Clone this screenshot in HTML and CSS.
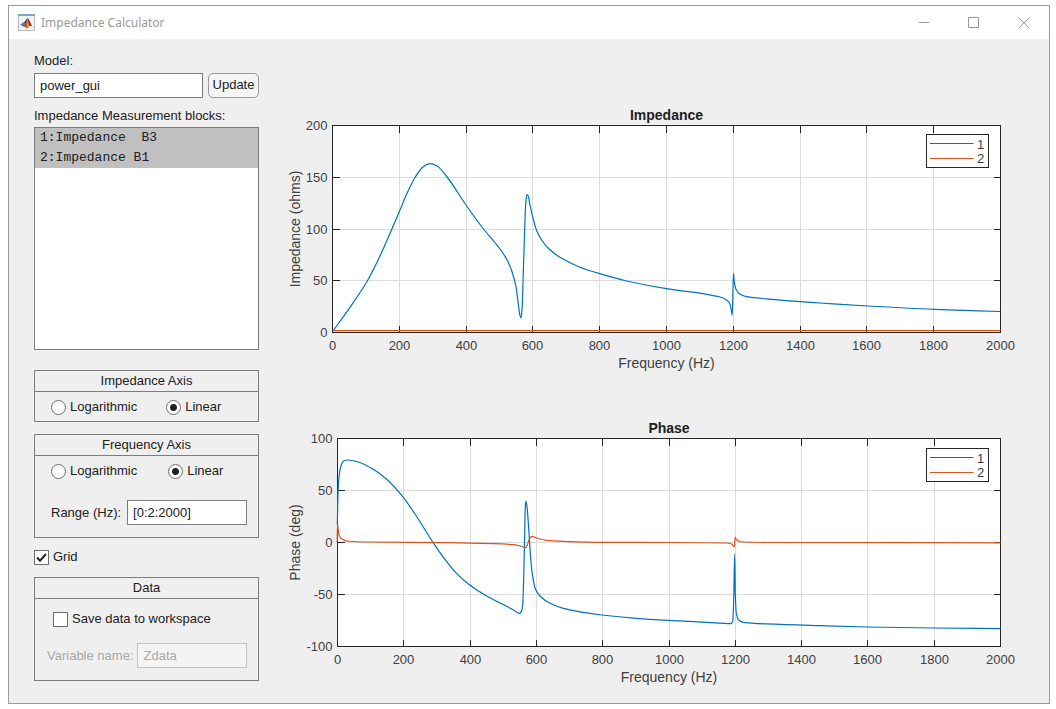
FILE: index.html
```html
<!DOCTYPE html>
<html lang="en">
<head>
<meta charset="utf-8">
<title>Impedance Calculator</title>
<link rel="stylesheet" href="styles.css">
</head>
<body>
<div class="window">
  <header class="titlebar">
    <svg class="logo" viewBox="0 0 17 17" aria-hidden="true">
      <rect x="0.5" y="0.5" width="16" height="16" fill="#f4f4f4" stroke="#b4b9be"/>
      <rect x="0" y="0" width="17" height="2" fill="#7aa5cc"/>
      <path d="M2 10.4L5.8 8.2L8 10.4L5.2 12.6Z" fill="#3f7fb5"/>
      <path d="M5.8 8.2C7.4 7.8 8 5.4 9.4 4L8.8 10L8 10.4Z" fill="#27466e"/>
      <path d="M9.4 4C8.6 7 7.6 9.6 5.2 12.6C7 12 7.8 13.8 8.6 14.4C10 13.8 10.6 12 12.2 11.8L10.6 6Z" fill="#c8401c"/>
      <path d="M9.4 4C9.2 8 8.6 11 8.6 14.4C10 13.6 10.4 12 11.4 11.8Z" fill="#f08c2a"/>
      <path d="M9.4 4C11.2 5 12.8 10.4 15 13C13.2 11.6 12.6 11.6 11.6 12Z" fill="#8c2414"/>
    </svg>
    <h1 class="title">Impedance Calculator</h1>
    <div class="controls">
      <button class="control" aria-label="Minimize"><svg viewBox="0 0 12 12"><path d="M0.5 5.5H11.5"/></svg></button>
      <button class="control" aria-label="Maximize"><svg viewBox="0 0 12 12"><path d="M0.5 0.5H10.5V10.5H0.5Z"/></svg></button>
      <button class="control" aria-label="Close"><svg viewBox="0 0 12 12"><path d="M0.5 0.5L11.5 11.5M11.5 0.5L0.5 11.5"/></svg></button>
    </div>
  </header>
  <main class="content">
    <form class="sidebar">
      <label class="label" for="model">Model:</label>
      <div class="model-row">
        <input class="field" id="model" type="text" value="power_gui">
        <button class="update" type="button">Update</button>
      </div>
      <label class="label" for="blocks">Impedance Measurement blocks:</label>
      <select class="list" id="blocks" multiple>
        <option selected>1:Impedance&nbsp; B3</option>
        <option selected>2:Impedance B1</option>
      </select>

      <section class="panel">
        <h2 class="panel-title">Impedance Axis</h2>
        <div class="radios">
          <label class="choice"><input class="radio" type="radio" name="zaxis">Logarithmic</label>
          <label class="choice"><input class="radio" type="radio" name="zaxis" checked>Linear</label>
        </div>
      </section>

      <section class="panel panel-frequency">
        <h2 class="panel-title">Frequency Axis</h2>
        <div class="radios">
          <label class="choice"><input class="radio" type="radio" name="faxis">Logarithmic</label>
          <label class="choice"><input class="radio" type="radio" name="faxis" checked>Linear</label>
        </div>
        <div class="entry entry-range">
          <label for="range">Range (Hz):</label>
          <input class="field" id="range" type="text" value="[0:2:2000]">
        </div>
      </section>

      <label class="choice grid-toggle"><input class="check" type="checkbox" checked>Grid</label>

      <section class="panel">
        <h2 class="panel-title">Data</h2>
        <label class="choice save"><input class="check" type="checkbox">Save data to workspace</label>
        <div class="entry entry-variable">
          <label for="variable">Variable name:</label>
          <input class="field" id="variable" type="text" value="Zdata" disabled>
        </div>
      </section>
    </form>

    <div class="charts">
      <svg class="chart" id="impedance" viewBox="280 100 760 280" role="img" aria-label="Impedance"></svg>
      <svg class="chart" id="phase" viewBox="280 413 760 280" role="img" aria-label="Phase"></svg>
    </div>
  </main>
</div>
<script src="charts.js"></script>
</body>
</html>
```
FILE: styles.css
```css
* { box-sizing: border-box; }

body {
  margin: 0;
  padding: 5px 6px 5px 8px;
  min-height: 100vh;
  display: flex;
  background: #fff;
  color: #212121;
  font: 13px/16px "Liberation Sans", Arial, sans-serif;
}

input, button, select { font: inherit; color: inherit; margin: 0; }

.window {
  flex: 1;
  display: flex;
  flex-direction: column;
  border: 1px solid #9b9b9b;
  background: #efefef;
}

.titlebar {
  display: flex;
  align-items: center;
  height: 33px;
  padding-left: 9px;
  background: #fff;
}
.logo { width: 17px; height: 17px; }
.title {
  flex: 1;
  margin: 0 0 0 6px;
  font: 12px/16px "Noto Sans", sans-serif;
  color: #999;
}
.controls { display: flex; }
.control {
  width: 50px;
  height: 32px;
  padding: 0;
  border: 0;
  background: none;
}
.control svg {
  display: block;
  width: 12px;
  height: 12px;
  margin: auto;
  fill: none;
  stroke: #999;
}

.content {
  flex: 1;
  display: flex;
  gap: 21px;
  padding: 13px 9px 10px 25px;
}

.sidebar {
  flex: 0 0 225px;
  min-width: 0;
  display: flex;
  flex-direction: column;
}
.label { line-height: 17px; }
.model-row { display: flex; gap: 5px; margin: 4px 0 9px; }
.field {
  flex: 1;
  min-width: 0;
  width: 0;
  height: 25px;
  padding: 0 5px;
  border: 1px solid #7d7d7d;
  border-radius: 0;
  background: #fff;
}
.update {
  width: 51px;
  height: 25px;
  padding: 0 0 2px;
  border: 1px solid #9a9a9a;
  border-radius: 5px;
  background: #f5f5f5;
}
.list {
  height: 223px;
  margin: 3px 0 20px;
  padding: 0;
  border: 1px solid #7d7d7d;
  border-radius: 0;
  background: #fff;
  font-family: "Liberation Mono", monospace;
  overflow: hidden;
}
.list option { padding: 2px 5px; line-height: 16px; min-height: 20px; color: #212121; }
.list option:checked { background: #c0c0c0 linear-gradient(#c0c0c0, #c0c0c0); color: #212121; }

.panel { border: 1px solid #7d7d7d; }
.panel-title {
  margin: 0;
  padding: 2px 0;
  border-bottom: 1px solid #7d7d7d;
  font: inherit;
  text-align: center;
}
.radios {
  display: flex;
  gap: 29px;
  padding: 7px 0 6px 16px;
}
.choice { display: flex; align-items: center; gap: 4px; }
.radio, .check {
  appearance: none;
  flex: none;
  width: 15px;
  height: 15px;
  border: 1px solid #6e6e6e;
  background: #fff;
}
.radio { border-radius: 50%; }
.radio:checked { background: radial-gradient(circle, #212121 3px, #fff 4px); }
.check:checked {
  background: #fff url("data:image/svg+xml,%3Csvg xmlns='http://www.w3.org/2000/svg' viewBox='0 0 13 13'%3E%3Cpath d='M2 6.5L5 9.7L11 3' fill='none' stroke='%23212121' stroke-width='2'/%3E%3C/svg%3E");
}

.panel-frequency { margin-top: 12px; }
.panel-frequency .radios { gap: 31px; }
.entry { display: flex; align-items: center; padding-right: 11px; gap: 6px; }
.entry-range { padding: 15px 11px 12px 16px; }
.grid-toggle { margin: 11px 0 12px; align-self: flex-start; }
.save { padding: 12px 0 12px 18px; }
.entry-variable { padding: 4px 11px 12px 12px; gap: 4px; color: #a8a8a8; }
.field:disabled { border-color: #c4c4c4; background: #f4f4f4; color: #a8a8a8; }

.charts {
  flex: 1;
  min-width: 0;
  display: flex;
  flex-direction: column;
  gap: 33px;
  padding-top: 48px;
}
.chart { display: block; width: 100%; }

.plot { fill: #fff; }
.grid { stroke: #dcdcdc; fill: none; shape-rendering: crispEdges; }
.axes { stroke: #262626; fill: none; shape-rendering: crispEdges; }
.legend { fill: #fff; stroke: #262626; shape-rendering: crispEdges; }
.curve { fill: none; stroke-width: 1.2; stroke-linejoin: round; }
.blue { stroke: #0072bd; }
.orange { stroke: #d95319; }
.tick { font-size: 13px; fill: #404040; }
.axis-name { font-size: 14px; fill: #404040; }
.chart-title { font-size: 14px; font-weight: bold; fill: #212121; }
.middle { text-anchor: middle; }
.end { text-anchor: end; }
```
FILE: charts.js
```js
// Smooth path through the points without overshoot between them.
function curve(points) {
  const n = points.length;
  const slope = [];
  for (let i = 0; i < n - 1; i++) {
    slope.push((points[i + 1][1] - points[i][1]) / (points[i + 1][0] - points[i][0]));
  }
  const m = [slope[0]];
  for (let i = 1; i < n - 1; i++) {
    const a = slope[i - 1], b = slope[i];
    m.push(a * b <= 0 ? 0 : 2 * a * b / (a + b));
  }
  m.push(slope[n - 2]);
  let d = `M${points[0]}`;
  for (let i = 0; i < n - 1; i++) {
    const [x0, y0] = points[i], [x1, y1] = points[i + 1];
    const h = (x1 - x0) / 3;
    d += `C${x0 + h},${y0 + m[i] * h} ${x1 - h},${y1 - m[i + 1] * h} ${x1},${y1}`;
  }
  return d;
}

function draw(id, c) {
  const right = 1000.5;
  const { left, top, bottom } = c;
  const mid = (left + right) / 2;
  const step = (right - left) / 10;
  let grid = "", ticks = "", labels = "";
  for (let i = 0; i <= 10; i++) {
    const x = Math.floor(left + i * step) + 0.5;
    if (i > 0 && i < 10) {
      grid += `M${x} ${top}V${bottom}`;
      ticks += `M${x} ${top}v7M${x} ${bottom}v-7`;
    }
    labels += `<text class="tick middle" x="${x}" y="${bottom + 17}">${i * 200}</text>`;
  }
  c.values.forEach((v, i) => {
    const y = Math.floor(bottom - i * (bottom - top) / 4) + 0.5;
    if (i > 0 && i < 4) {
      grid += `M${left} ${y}H${right}`;
      ticks += `M${left} ${y}h7M${right} ${y}h-7`;
    }
    labels += `<text class="tick end" x="${left - 5}" y="${y + 4}">${v}</text>`;
  });
  const ly = c.legend;
  const nameY = (top + bottom) / 2;
  document.getElementById(id).innerHTML = `
    <rect class="plot" x="${left}" y="${top}" width="${right - left}" height="${bottom - top}"/>
    <path class="grid" d="${grid}"/>
    <path class="axes" d="${ticks}M${left} ${top}H${right}V${bottom}H${left}Z"/>
    <path class="curve blue" d="${curve(c.blue)}"/>
    <path class="curve orange" d="${curve(c.orange)}"/>
    ${labels}
    <text class="chart-title middle" x="${mid}" y="${top - 6}">${c.title}</text>
    <text class="axis-name middle" x="${mid}" y="${bottom + 35}">Frequency (Hz)</text>
    <text class="axis-name middle" transform="translate(300 ${nameY}) rotate(-90)">${c.yName}</text>
    <rect class="legend" x="926.5" y="${ly}" width="62" height="33"/>
    <path class="curve blue" d="M930 ${ly + 9}H973.5"/>
    <path class="curve orange" d="M930 ${ly + 24}H973.5"/>
    <text class="tick" x="977" y="${ly + 14}">1</text>
    <text class="tick" x="977" y="${ly + 28}">2</text>`;
}

draw("impedance", {
  title: "Impedance", yName: "Impedance (ohms)",
  left: 332.5, top: 125.5, bottom: 332.5, legend: 134.5,
  values: ["0", "50", "100", "150", "200"],
  blue: [[333, 331], [349.3, 308.3], [366.7, 282], [380, 256], [399.3, 211.7], [406.7, 194], [415, 177.5],
    [423.3, 166.7], [430, 163.7], [436.7, 165.7], [446.7, 176.5], [466, 205], [482.7, 228], [500, 249],
    [506.7, 259.3], [511.7, 270.7], [516, 286.7], [518, 301.7], [520, 315.7], [521, 318], [522, 310],
    [523, 283], [524.3, 240], [525.3, 211.7], [526, 200], [527, 194.7], [528.3, 196], [530, 205],
    [533.3, 219.3], [536.7, 230.7], [541.7, 240], [548.3, 248.3], [560, 257.3], [580, 267.2],
    [599.7, 273.7], [626.7, 281], [666.3, 288.7], [706.7, 294.3], [720, 297], [726.7, 300], [730, 304.3],
    [731.3, 310], [732.2, 315.3], [733.5, 273.3], [734.3, 281.7], [736, 289.3], [740, 294.3],
    [746.7, 296.7], [766.7, 298.9], [800, 301.7], [820, 303], [867.7, 306], [934, 309.3], [1000.5, 311.5]],
  orange: [[333, 330.7], [1000.5, 330.7]]
});

draw("phase", {
  title: "Phase", yName: "Phase (deg)",
  left: 337.5, top: 438.5, bottom: 646.5, legend: 448.5,
  values: ["-100", "-50", "0", "50", "100"],
  blue: [[337.3, 525], [338, 493.3], [339, 476.7], [340.7, 466.7], [343.3, 461.3], [348, 460],
    [358.3, 462], [373.3, 469.3], [386.7, 479.3], [402.7, 496.7], [415, 514], [433.3, 542.8],
    [446.7, 561.7], [456.7, 573.7], [469.3, 584.7], [486.7, 596], [506.7, 606.3], [515, 611],
    [519.3, 613.3], [521.3, 611.7], [522.7, 605], [523.7, 576.7], [524.7, 533], [525.3, 506.7],
    [526, 501], [527, 506.7], [529, 533], [530.3, 553.3], [532, 571.7], [535.3, 588.7], [540, 596],
    [550, 603.3], [563.3, 608.3], [580, 611.8], [601.7, 615], [636.7, 618.3], [668.3, 620.3],
    [706.7, 622.3], [730.7, 623.7], [732.7, 621.7], [733.7, 600], [734.7, 554.3], [735.3, 593.3],
    [736.3, 613.3], [738.7, 620], [743.3, 622.3], [766.7, 623.9], [820, 625.7], [867.7, 627],
    [934, 628], [1000.5, 628.7]],
  orange: [[337.2, 541.7], [337.5, 524.3], [339, 535], [341.7, 539], [346.7, 541], [366.7, 542],
    [446.7, 542.7], [493.3, 543.7], [513.3, 544.7], [520, 546], [525.7, 547.7], [527.3, 545],
    [529.3, 539], [531.7, 536.3], [536.7, 538], [546.7, 540.3], [563.3, 541.3], [601.7, 542.3],
    [668.3, 542.5], [726.7, 543], [731.7, 544], [734.3, 547], [735.2, 537.3], [736.7, 540],
    [741.7, 542], [766.7, 542.5], [1000.5, 542.8]]
});
```
